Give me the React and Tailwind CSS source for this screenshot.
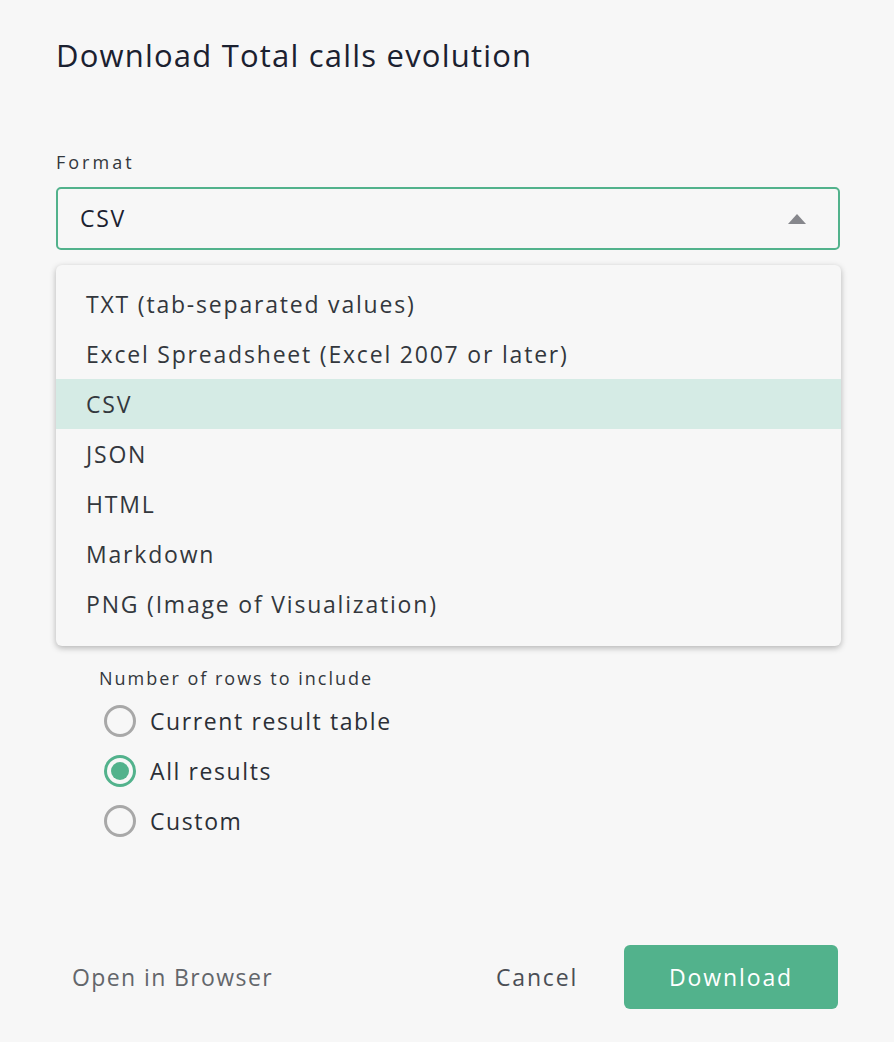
import React from "react";

const items = [
  "TXT (tab-separated values)",
  "Excel Spreadsheet (Excel 2007 or later)",
  "CSV",
  "JSON",
  "HTML",
  "Markdown",
  "PNG (Image of Visualization)",
];

function Radio({ checked, label }) {
  return (
    <div className="flex items-center h-[50px]">
      <div
        className={
          checked
            ? "ml-[5px] w-[32px] h-[32px] rounded-full border-[3px] border-[#52b28c] flex items-center justify-center"
            : "ml-[5px] w-[32px] h-[32px] rounded-full border-[3px] border-[#a8a8a8]"
        }
      >
        {checked && <div className="w-[18px] h-[18px] rounded-full bg-[#52b28c]" />}
      </div>
      <span className="ml-[14px] text-[23px] tracking-[1.6px] text-[#2b2f36]">{label}</span>
    </div>
  );
}

export default function App() {
  return (
    <div
      className="w-[894px] h-[1042px] bg-[#f7f7f7] flex flex-col px-[56px]"
      style={{ fontFamily: '"Open Sans", "Liberation Sans", sans-serif' }}
    >
      <h1 className="pt-[37px] text-[31px] leading-[36px] tracking-[1.2px] text-[#1b2130] font-normal">
        Download Total calls evolution
      </h1>
      <div className="mt-[77px] text-[18px] leading-[24px] tracking-[3px] text-[#33373d]">Format</div>
      <div className="relative mt-[13px]">
        <div className="h-[63px] w-[784px] rounded-[5px] border-2 border-[#52b28c] flex items-center justify-between pl-[22px] pr-[32px]">
          <span className="text-[23px] tracking-[1.7px] text-[#1b2130]">CSV</span>
          <svg width="18" height="10" viewBox="0 0 18 10">
            <path d="M9 0 L18 10 L0 10 Z" fill="#86878c" />
          </svg>
        </div>
        <div className="absolute left-0 top-[78px] w-[785px] rounded-[6px] bg-[#f7f7f7] shadow-[0_2px_6px_rgba(0,0,0,0.28)] pt-[14px] pb-[17px] z-10">
          {items.map((it) => (
            <div
              key={it}
              className={
                it === "CSV"
                  ? "h-[50px] flex items-center pl-[30px] text-[23px] tracking-[1.8px] text-[#33373d] bg-[#d5ebe5]"
                  : "h-[50px] flex items-center pl-[30px] text-[23px] tracking-[1.8px] text-[#33373d]"
              }
            >
              {it}
            </div>
          ))}
        </div>
      </div>
      <div className="mt-[416px] pl-[43px]">
        <div className="text-[18px] leading-[24px] tracking-[2px] text-[#33373d]">Number of rows to include</div>
        <div className="mt-[6px] flex flex-col">
          <Radio label="Current result table" />
          <Radio label="All results" checked />
          <Radio label="Custom" />
        </div>
      </div>
      <div className="mt-auto pb-[33px] flex items-center">
        <button className="px-[16px] h-[64px] text-[23px] tracking-[1.4px] text-[#63666b]">Open in Browser</button>
        <div className="flex-1" />
        <button className="px-[16px] h-[64px] text-[23px] tracking-[1.8px] text-[#4a4e55]">Cancel</button>
        <button className="ml-[30px] w-[214px] h-[64px] rounded-[6px] bg-[#52b28c] text-white text-[23px] tracking-[1.9px]">
          Download
        </button>
      </div>
    </div>
  );
}
